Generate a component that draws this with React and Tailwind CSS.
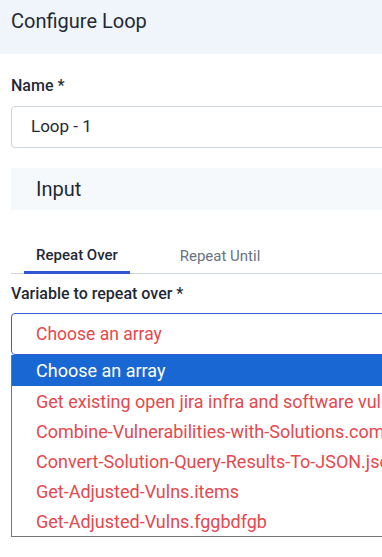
export default function App() {
  const options = [
    "Get existing open jira infra and software vulnerabilities.items",
    "Combine-Vulnerabilities-with-Solutions.combined",
    "Convert-Solution-Query-Results-To-JSON.json",
    "Get-Adjusted-Vulns.items",
    "Get-Adjusted-Vulns.fggbdfgb",
  ];
  return (
    <div className="w-[382px] h-[557px] overflow-hidden bg-white" style={{ fontFamily: "Roboto, 'Noto Sans', sans-serif" }}>
      <div className="w-[640px]">
        <div className="h-[54px] bg-[#eff5fa] pl-[11px] pt-[7px] text-[20px] leading-[28px] text-[#1f2937]">Configure Loop</div>
        <div className="pl-[11px]">
          <div className="mt-[22px] text-[16px] font-medium text-[#1f2937] leading-[20px]">Name *</div>
          <div className="mt-[10px] h-[42px] border border-[#cfd5dc] rounded-[4px] flex items-center pl-[19px] text-[17px] text-[#1f2937]">Loop - 1</div>
          <div className="mt-[20px] h-[42px] bg-[#f6f9fc] flex items-center pl-[25px] text-[20px] text-[#1f2937]">Input</div>
          <div className="mt-[27px] border-b border-[#cfd5dc] flex h-[37px]">
            <div className="ml-[13px] w-[106px] flex items-center justify-center text-[15px] font-medium text-[#1f2937] border-b-[3px] border-[#3056d3] pt-[3px] -mb-px">Repeat Over</div>
            <div className="ml-[37px] w-[106px] flex items-center justify-center text-[15px] text-[#6b7280] pt-[3px]">Repeat Until</div>
          </div>
          <div className="mt-[10px] text-[16px] font-medium text-[#1f2937] leading-[20px]">Variable to repeat over *</div>
          <div className="mt-[9px] h-[42px] border border-[#3b5bdb] rounded-[4px] flex items-center pl-[24px] pt-[1px] text-[17.5px] text-[#e5484d]">Choose an array</div>
          <div className="border border-t-0 border-[#767676]">
            <div className="h-[31px] bg-[#1967d2] text-white flex items-center pl-[24px] text-[18px]">Choose an array</div>
            {options.map((o) => (
              <div key={o} className="h-[30px] flex items-center pl-[24px] text-[18px] text-[#e5484d] whitespace-nowrap">{o}</div>
            ))}
          </div>
        </div>
      </div>
    </div>
  );
}
